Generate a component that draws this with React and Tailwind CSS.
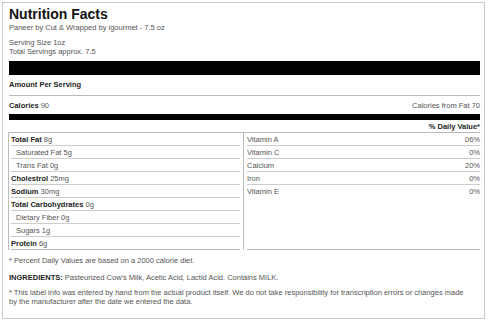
import React from 'react';

const leftRows = [
  { label: 'Total Fat', value: '8g', bold: true },
  { label: 'Saturated Fat', value: '5g', indent: true },
  { label: 'Trans Fat', value: '0g', indent: true },
  { label: 'Cholestrol', value: '25mg', bold: true },
  { label: 'Sodium', value: '30mg', bold: true },
  { label: 'Total Carbohydrates', value: '0g', bold: true },
  { label: 'Dietary Fiber', value: '0g', indent: true },
  { label: 'Sugars', value: '1g', indent: true },
  { label: 'Protein', value: '6g', bold: true, last: true },
];

const rightRows = [
  { label: 'Vitamin A', value: '06%' },
  { label: 'Vitamin C', value: '0%' },
  { label: 'Calcium', value: '20%' },
  { label: 'Iron', value: '0%' },
  { label: 'Vitamin E', value: '0%', last: true },
];

export default function App() {
  return (
    <div className="w-[500px] h-[325px] bg-white p-[2px] font-['Liberation_Sans',Arial,sans-serif] text-[7.5px] leading-[9px] text-[#555]">
      <div className="w-[483px] h-[317px] border border-[#c8c8c8] pl-[6px] pr-[4px] pt-[3px]">
        <h1 className="text-[14px] leading-[16px] font-bold text-[#111]">Nutrition Facts</h1>
        <div className="mt-[1px]">Paneer by Cut &amp; Wrapped by igourmet - 7.5 oz</div>
        <div className="mt-[6px]">Serving Size 1oz</div>
        <div>Total Servings approx. 7.5</div>
        <div className="mt-[5px] h-[14px] bg-black" />
        <div className="pt-[5px] pb-[6px] border-b border-[#bbb] font-bold text-[#222]">Amount Per Serving</div>
        <div className="flex justify-between pt-[5px] pb-[4px]">
          <span><b className="text-[#222]">Calories</b> 90</span>
          <span>Calories from Fat 70</span>
        </div>
        <div className="h-[6px] bg-black" />
        <div className="text-right font-bold text-[#222] pt-[2px]">% Daily Value*</div>
        <div className="flex border-t border-[#bbb] mt-[1px] -ml-[1px]">
          <div className="w-[236px] border-l border-r border-[#bbb] pl-[2px] pr-[3px]">
            {leftRows.map((r) => (
              <div
                key={r.label}
                className={`h-[13px] pt-[2px] ${r.indent ? 'pl-[5px]' : ''} ${r.last ? 'border-b border-[#bbb]' : 'border-b border-[#ccc]'}`}
              >
                {r.bold ? <b className="text-[#222]">{r.label}</b> : r.label} {r.value}
              </div>
            ))}
          </div>
          <div className="flex-1 pl-[3px] flex flex-col">
            {rightRows.map((r) => (
              <div
                key={r.label}
                className={`h-[13px] pt-[2px] flex justify-between ${r.last ? '' : 'border-b border-[#ccc]'}`}
              >
                <span>{r.label}</span>
                <span>{r.value}</span>
              </div>
            ))}
            <div className="flex-1 border-b border-[#bbb]" />
          </div>
        </div>
        <div className="mt-[6px]">* Percent Daily Values are based on a 2000 calorie diet.</div>
        <div className="mt-[8px]">
          <b className="text-[#222]">INGREDIENTS:</b> Pasteurized Cow's Milk, Acetic Acid, Lactid Acid. Contains MILK.
        </div>
        <div className="mt-[6px] pr-[10px]">
          * This label info was entered by hand from the actual product itself. We do not take responsibility for transcription errors or changes made by the manufacturer after the date we entered the data.
        </div>
      </div>
    </div>
  );
}
